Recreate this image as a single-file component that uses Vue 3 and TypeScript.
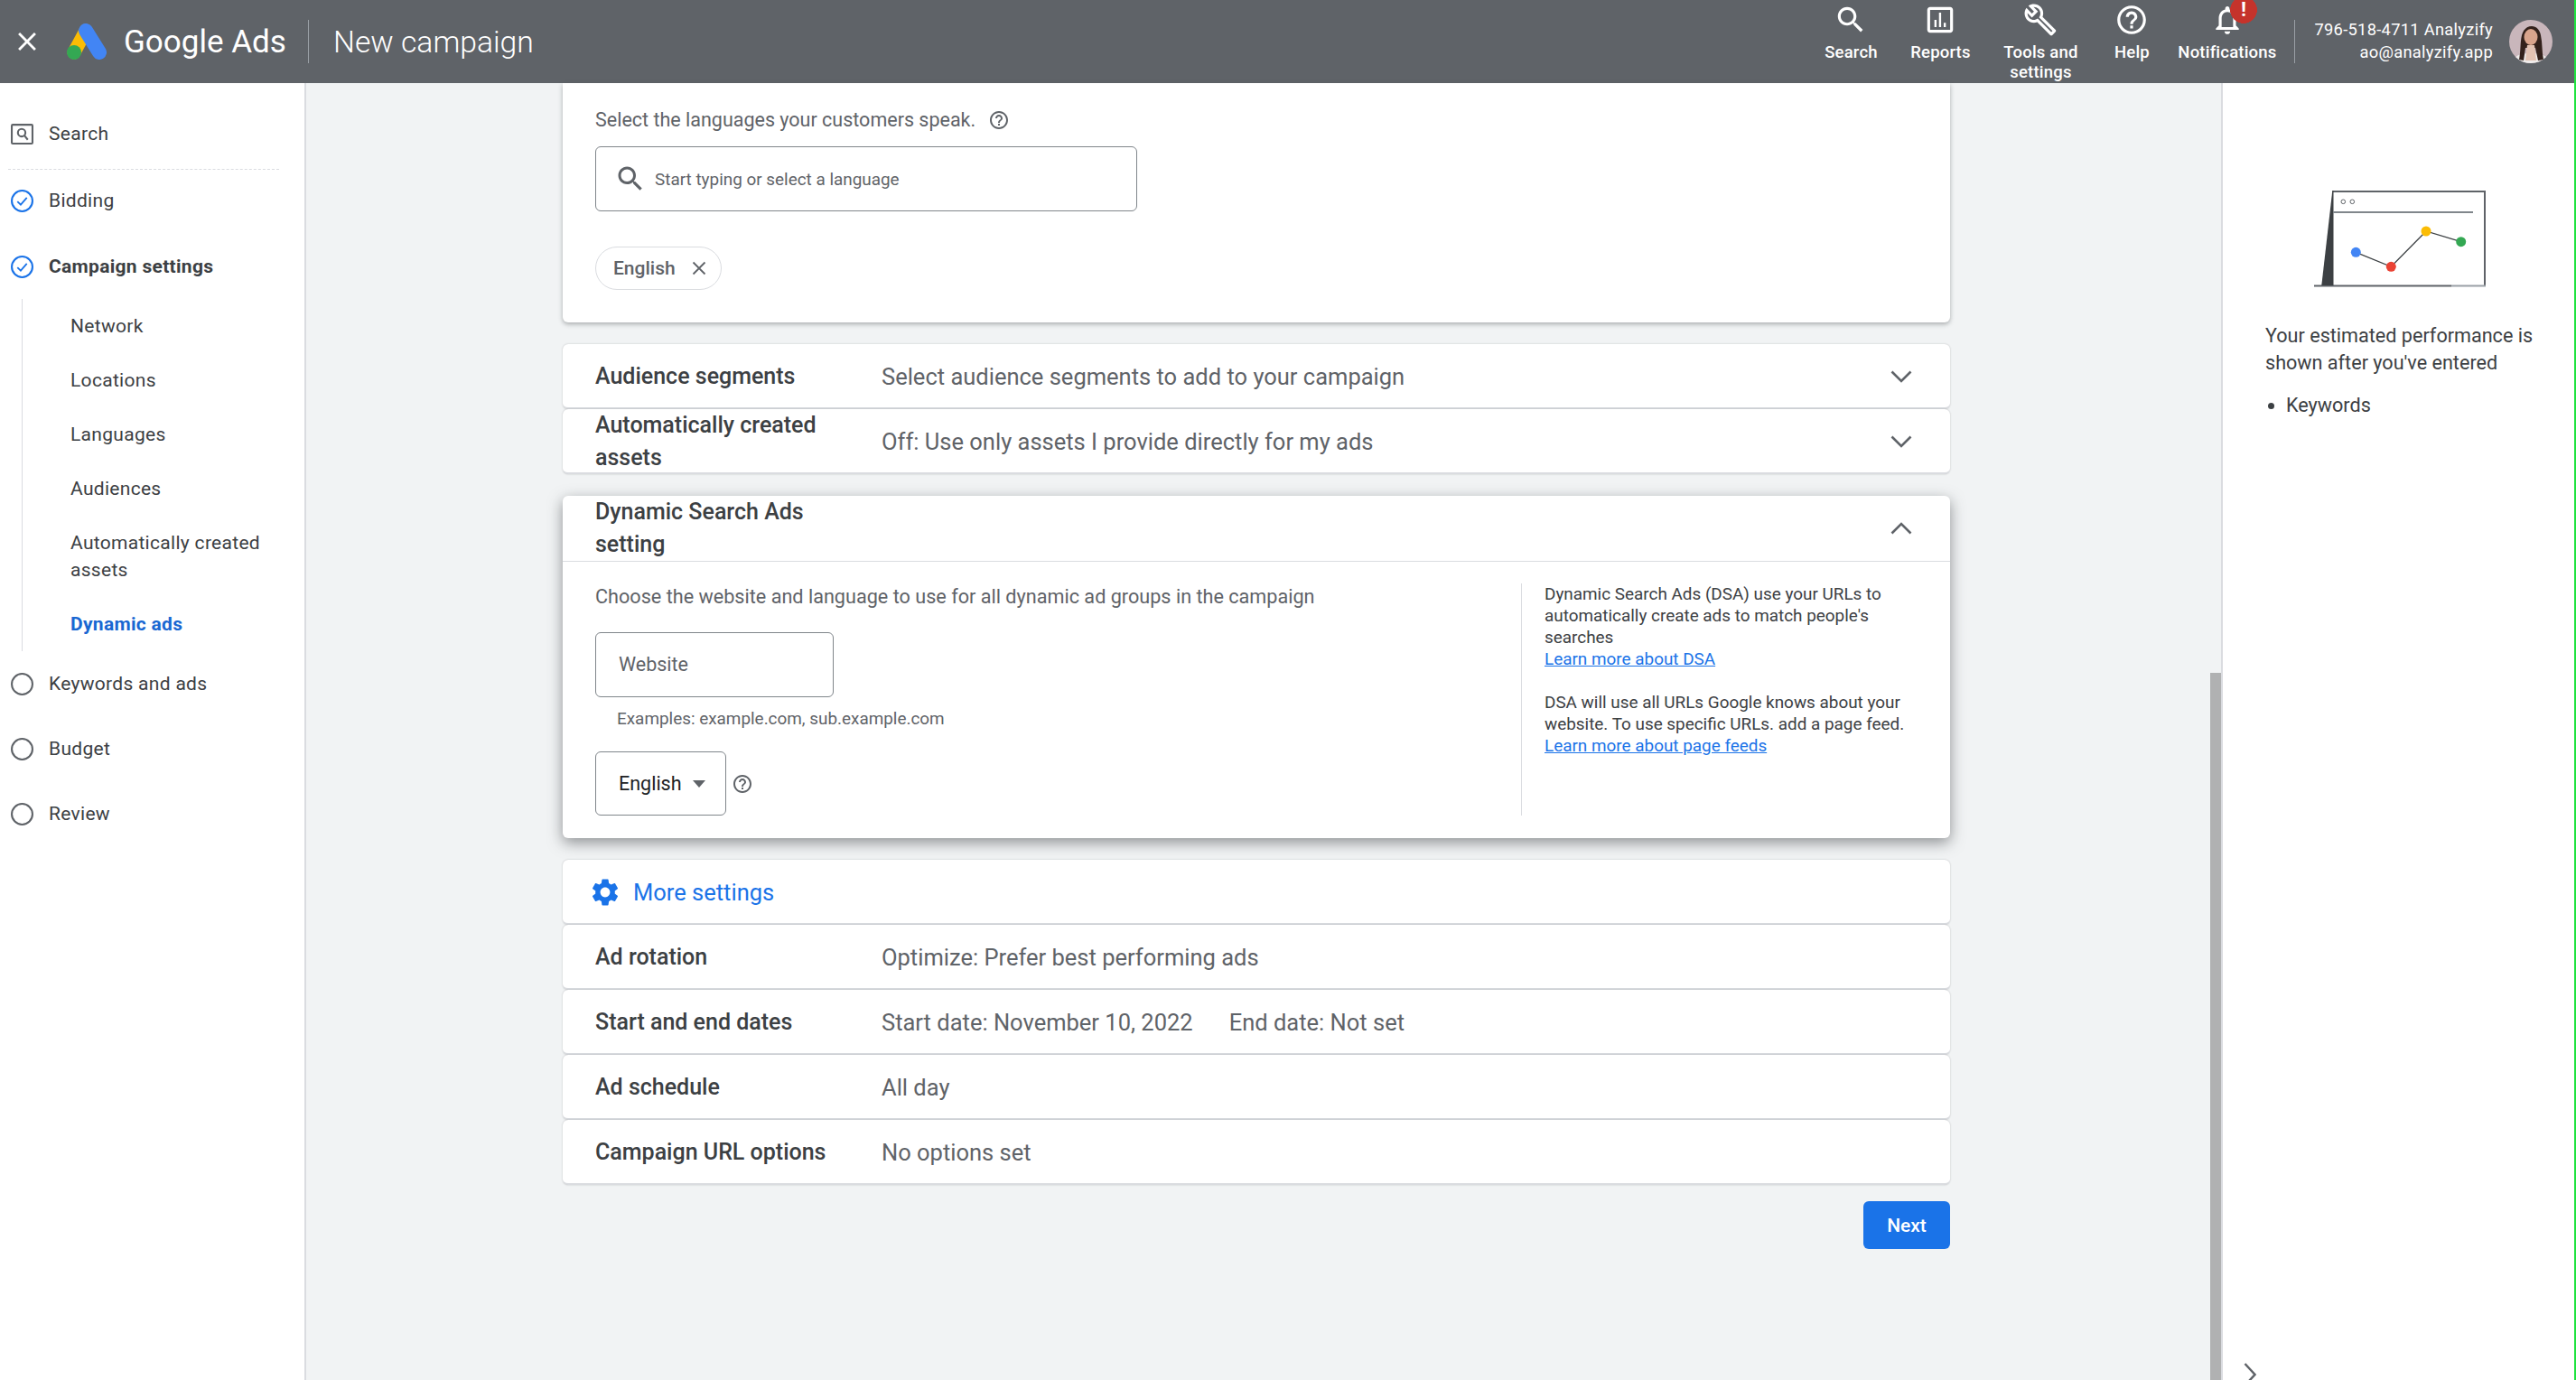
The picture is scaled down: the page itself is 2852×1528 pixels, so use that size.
<script setup lang="ts">
const ICONS: Record<string, string> = {
  search: 'M15.5 14h-.79l-.28-.27C15.41 12.59 16 11.11 16 9.5 16 5.91 13.09 3 9.5 3S3 5.91 3 9.5 5.91 16 9.5 16c1.61 0 3.09-.59 4.23-1.57l.27.28v.79l5 4.99L20.49 19l-4.99-5zm-6 0C7.01 14 5 11.99 5 9.5S7.01 5 9.5 5 14 7.01 14 9.5 11.99 14 9.5 14z',
  reports: 'M19 3H5c-1.1 0-2 .9-2 2v14c0 1.1.9 2 2 2h14c1.1 0 2-.9 2-2V5c0-1.1-.9-2-2-2zm0 16H5V5h14v14zM8 12h1.5v5H8zm3.2-5h1.5v10h-1.500zm3.300 7h1.500v3h-1.500z',
  tools: 'M22.61 18.99l-9.08-9.08c.93-2.34.45-5.1-1.44-7C9.79.61 6.21.4 3.66 2.26L7.5 6.11 6.08 7.52 2.25 3.69C.39 6.23.6 9.82 2.9 12.11c1.86 1.86 4.57 2.35 6.89 1.48l9.11 9.11c.39.39 1.02.39 1.41 0l2.3-2.3c.4-.38.4-1.01 0-1.41zm-3 1.6l-9.46-9.46c-.61.45-1.29.72-2 .82-1.36.2-2.79-.21-3.83-1.25C3.37 9.76 2.93 8.5 3 7.26l3.09 3.09 4.24-4.24-3.09-3.09c1.24-.07 2.49.37 3.44 1.31 1.08 1.08 1.49 2.57 1.24 3.96-.12.71-.42 1.37-.88 1.96l9.45 9.45-.88.89z',
  help: 'M11 18h2v-2h-2v2zm1-16C6.48 2 2 6.48 2 12s4.48 10 10 10 10-4.48 10-10S17.52 2 12 2zm0 18c-4.41 0-8-3.59-8-8s3.59-8 8-8 8 3.59 8 8-3.59 8-8 8zm0-14c-2.21 0-4 1.79-4 4h2c0-1.1.9-2 2-2s2 .9 2 2c0 2-3 1.75-3 5h2c0-2.25 3-2.5 3-5 0-2.21-1.79-4-4-4z',
  bell: 'M12 22c1.1 0 2-.9 2-2h-4c0 1.1.9 2 2 2zm6-6v-5c0-3.07-1.63-5.64-4.5-6.32V4c0-.83-.67-1.5-1.5-1.5s-1.5.67-1.5 1.5v.68C7.64 5.36 6 7.92 6 11v5l-2 2v1h16v-1l-2-2zm-2 1H8v-6c0-2.48 1.51-4.500 4-4.500s4 2.020 4 4.500v6z',
  close: 'M19 6.410L17.590 5 12 10.590 6.410 5 5 6.410 10.590 12 5 17.590 6.410 19 12 13.410 17.590 19 19 17.590 13.410 12z',
  gear: 'M19.140 12.940c.04-.3.06-.61.06-.94 0-.32-.02-.64-.07-.94l2.030-1.580c.18-.14.23-.41.12-.61l-1.920-3.320c-.12-.22-.37-.29-.59-.22l-2.390.96c-.5-.38-1.030-.7-1.620-.94l-.36-2.540c-.04-.24-.24-.41-.48-.41h-3.840c-.24 0-.43.17-.47.41l-.36 2.540c-.59.24-1.130.57-1.620.94l-2.390-.96c-.22-.08-.47 0-.59.22L2.740 8.870c-.12.21-.08.47.12.61l2.030 1.580c-.05.3-.09.63-.09.94s.02.64.07.94l-2.030 1.580c-.18.14-.23.41-.12.61l1.920 3.320c.12.22.37.29.59.22l2.390-.96c.5.38 1.030.7 1.620.94l.36 2.540c.05.24.24.41.48.41h3.840c.24 0 .44-.17.47-.41l.36-2.540c.59-.24 1.130-.56 1.620-.94l2.390.96c.22.08.47 0 .59-.22l1.920-3.320c.12-.22.07-.47-.12-.61l-2.010-1.580zM12 15.600c-1.980 0-3.600-1.620-3.600-3.600s1.620-3.600 3.600-3.600 3.600 1.620 3.600 3.600-1.620 3.600-3.600 3.600z'
}

const topNav = [
  { label: 'Search', icon: 'search', width: 90 },
  { label: 'Reports', icon: 'reports', width: 108 },
  { label: 'Tools and settings', icon: 'tools', width: 114 },
  { label: 'Help', icon: 'help', width: 88 },
  { label: 'Notifications', icon: 'bell', width: 123, badge: true }
]

const subSteps = ['Network', 'Locations', 'Languages', 'Audiences', 'Automatically created assets']
const laterSteps = ['Keywords and ads', 'Budget', 'Review']

const lowerRows = [
  { label: 'Ad rotation', values: ['Optimize: Prefer best performing ads'] },
  { label: 'Start and end dates', values: ['Start date: November 10, 2022', 'End date: Not set'] },
  { label: 'Ad schedule', values: ['All day'] },
  { label: 'Campaign URL options', values: ['No options set'] }
]
</script>

<template>
  <div class="page">
    <header class="topbar">
      <svg class="close-icon" viewBox="0 0 24 24"><path :d="ICONS.close" /></svg>
      <svg class="logo" viewBox="0 0 44 40">
        <line x1="21" y1="8" x2="8" y2="32" stroke="#fbbc04" stroke-width="15" stroke-linecap="round" />
        <circle cx="8" cy="32" r="8" fill="#34a853" />
        <line x1="21" y1="8" x2="36" y2="32" stroke="#4285f4" stroke-width="16" stroke-linecap="round" />
      </svg>
      <span class="brand">Google Ads</span>
      <span class="bar-divider first"></span>
      <span class="title">New campaign</span>

      <nav class="top-nav">
        <div v-for="item in topNav" :key="item.label" class="top-item" :style="{ width: item.width + 'px' }">
          <svg class="top-icon" viewBox="0 0 24 24"><path :d="ICONS[item.icon]" /></svg>
          <span v-if="item.badge" class="badge">!</span>
          <span class="top-label">{{ item.label }}</span>
        </div>
      </nav>
      <span class="bar-divider"></span>
      <div class="account">
        <div>796-518-4711 Analyzify</div>
        <div>ao@analyzify.app</div>
      </div>
      <svg class="avatar" viewBox="0 0 48 48">
        <defs><clipPath id="av"><circle cx="24" cy="24" r="24" /></clipPath></defs>
        <g clip-path="url(#av)">
          <rect width="48" height="48" fill="#c9b6bb" />
          <path d="M4 48c1-8 7-11 20-11s19 3 20 11z" fill="#efeceb" />
          <path d="M11 44c2-10 1-18 3-27 2-7 6-10 11-10s9 4 10 10c2 9 1 18 3 27l-6 1-3-14H18l-2 14z" fill="#33211b" />
          <ellipse cx="24" cy="19" rx="7.500" ry="9" fill="#d9a48c" />
          <path d="M20 28h8l2 17H18z" fill="#e3c3b3" />
        </g>
      </svg>
    </header>

    <div class="body">
      <aside class="sidebar">
        <div class="step">
          <svg class="step-icon" viewBox="0 0 24 24" fill="none" stroke="#5f6368" stroke-width="2">
            <rect x="1" y="2" width="22" height="20" rx="1" />
            <circle cx="11.500" cy="10.500" r="4" />
            <line x1="14.500" y1="13.500" x2="18" y2="18" />
          </svg>
          <span>Search</span>
        </div>
        <div class="dashed"></div>
        <div class="step bidding">
          <svg class="step-icon" viewBox="0 0 24 24" fill="none" stroke="#1a73e8" stroke-width="2">
            <circle cx="12" cy="12" r="11" />
            <path d="M7 12.500l3.500 3.500 6.500-7.500" stroke-width="1.700" />
          </svg>
          <span>Bidding</span>
        </div>
        <div class="step current">
          <svg class="step-icon" viewBox="0 0 24 24" fill="none" stroke="#1a73e8" stroke-width="2">
            <circle cx="12" cy="12" r="11" />
            <path d="M7 12.500l3.500 3.500 6.500-7.500" stroke-width="1.700" />
          </svg>
          <span>Campaign settings</span>
        </div>
        <div class="sub-list">
          <div v-for="sub in subSteps" :key="sub" class="sub-step">{{ sub }}</div>
          <div class="sub-step active">Dynamic ads</div>
        </div>
        <div v-for="step in laterSteps" :key="step" class="step">
          <svg class="step-icon" viewBox="0 0 24 24" fill="none" stroke="#5f6368" stroke-width="2">
            <circle cx="12" cy="12" r="11" />
          </svg>
          <span>{{ step }}</span>
        </div>
      </aside>

      <main class="main">
        <section class="card lang-card">
          <div class="lang-label">
            <span>Select the languages your customers speak.</span>
            <svg class="help-small" viewBox="0 0 24 24"><path :d="ICONS.help" /></svg>
          </div>
          <div class="lang-input">
            <svg class="lang-search" viewBox="0 0 24 24"><path :d="ICONS.search" /></svg>
            <span>Start typing or select a language</span>
          </div>
          <div class="chip">
            <span>English</span>
            <svg class="chip-x" viewBox="0 0 16 16"><path d="M1.500 1.500l13 13M14.500 1.500l-13 13" /></svg>
          </div>
        </section>

        <div class="panel-row">
          <span class="row-label">Audience segments</span>
          <span class="row-value">Select audience segments to add to your campaign</span>
          <svg class="chev" viewBox="0 0 24 14"><path d="M1.500 1.500L12 12 22.500 1.500" /></svg>
        </div>
        <div class="panel-row">
          <span class="row-label">Automatically created assets</span>
          <span class="row-value">Off: Use only assets I provide directly for my ads</span>
          <svg class="chev" viewBox="0 0 24 14"><path d="M1.500 1.500L12 12 22.500 1.500" /></svg>
        </div>

        <section class="card dsa-card">
          <div class="dsa-head">
            <span class="row-label">Dynamic Search Ads setting</span>
            <svg class="chev" viewBox="0 0 24 14"><path d="M1.500 12.500L12 2 22.500 12.500" /></svg>
          </div>
          <div class="dsa-body">
            <div class="dsa-form">
              <div class="dsa-intro">Choose the website and language to use for all dynamic ad groups in the campaign</div>
              <div class="website-box">Website</div>
              <div class="hint">Examples: example.com, sub.example.com</div>
              <div class="lang-select-row">
                <div class="lang-select">
                  <span>English</span>
                  <span class="caret"></span>
                </div>
                <svg class="help-small" viewBox="0 0 24 24"><path :d="ICONS.help" /></svg>
              </div>
            </div>
            <div class="dsa-aside">
              <p>
                Dynamic Search Ads (DSA) use your URLs to automatically create ads to match people's searches<br />
                <a>Learn more about DSA</a>
              </p>
              <p>
                DSA will use all URLs Google knows about your website. To use specific URLs. add a page feed.<br />
                <a>Learn more about page feeds</a>
              </p>
            </div>
          </div>
        </section>

        <div class="panel-row more-row">
          <svg class="gear" viewBox="0 0 24 24"><path :d="ICONS.gear" /></svg>
          <span>More settings</span>
        </div>
        <div v-for="row in lowerRows" :key="row.label" class="panel-row">
          <span class="row-label">{{ row.label }}</span>
          <span v-for="value in row.values" :key="value" class="row-value spaced">{{ value }}</span>
        </div>

        <div class="actions">
          <button class="next-btn">Next</button>
        </div>
      </main>

      <div class="scroll-track"><div class="scroll-thumb"></div></div>

      <aside class="estimate">
        <svg class="illustration" viewBox="0 0 190 107">
          <path d="M20.300 1H189V105" fill="none" stroke="#5f6368" stroke-width="2" />
          <line x1="0" y1="105.500" x2="152" y2="105.500" stroke="#5f6368" stroke-width="2" />
          <line x1="152" y1="105.500" x2="190" y2="105.500" stroke="#9aa0a6" stroke-width="2" />
          <polygon points="20.300,0 21.500,0 21.500,105 8.300,105" fill="#3c4043" />
          <line x1="21" y1="24" x2="176" y2="24" stroke="#80868b" stroke-width="2" />
          <circle cx="32.300" cy="12.300" r="2.300" fill="none" stroke="#5f6368" />
          <circle cx="42.300" cy="12.300" r="2.300" fill="none" stroke="#5f6368" />
          <polyline points="46.300,68.300 85.300,84.300 124,45 162.700,56.700" fill="none" stroke="#3c4043" stroke-width="1.300" />
          <circle cx="46.300" cy="68.300" r="5.500" fill="#4285f4" />
          <circle cx="85.300" cy="84.300" r="5.500" fill="#ea4335" />
          <circle cx="124" cy="45" r="5.500" fill="#fbbc04" />
          <circle cx="162.700" cy="56.700" r="5.500" fill="#34a853" />
        </svg>
        <p class="estimate-text">Your estimated performance is shown after you've entered</p>
        <ul class="estimate-list"><li>Keywords</li></ul>
        <svg class="expand" viewBox="0 0 14 26"><path d="M1.500 1l11 12-11 12" /></svg>
      </aside>
    </div>
  </div>
</template>

<style>
html, body {
  margin: 0;
  background: #fff;
}
</style>

<style scoped>
.page {
  width: 2850px;
  height: 1528px;
  border-right: 2px solid #1fe33f;
  display: flex;
  flex-direction: column;
  overflow: hidden;
  font-family: Roboto, "Liberation Sans", sans-serif;
  color: #3c4043;
}

.topbar {
  height: 92px;
  flex: none;
  display: flex;
  align-items: center;
  background: #5f6368;
  color: #fff;
  padding-right: 24px;
}
.close-icon {
  width: 34px;
  height: 34px;
  margin-left: 13px;
  fill: #fff;
}
.logo {
  width: 44px;
  height: 40px;
  margin-left: 27px;
  flex: none;
}
.brand {
  font-size: 35px;
  margin-left: 19px;
  width: 204px;
  flex: none;
}
.bar-divider {
  width: 1px;
  height: 48px;
  background: #9aa0a6;
  flex: none;
  margin-left: 13px;
}
.bar-divider.first {
  margin-left: 0;
}
.title {
  font-size: 33.700px;
  font-weight: 300;
  margin-left: 27px;
}
.top-nav {
  display: flex;
  margin-left: auto;
  height: 92px;
}
.top-item {
  position: relative;
  display: flex;
  flex-direction: column;
  align-items: center;
  padding-top: 3px;
  box-sizing: border-box;
}
.top-icon {
  width: 38px;
  height: 38px;
  fill: #fff;
  flex: none;
}
.top-label {
  margin-top: 6px;
  font-size: 18.500px;
  font-weight: 500;
  line-height: 22px;
  text-align: center;
  letter-spacing: 0.2px;
}
.badge {
  position: absolute;
  top: 0;
  left: calc(50% + 3px);
  width: 30px;
  height: 26px;
  background: radial-gradient(circle 15px at 15px 11px, #c5332b 98%, transparent 100%);
  color: #fff;
  font-size: 22px;
  font-weight: 700;
  line-height: 22px;
  text-align: center;
}
.account {
  margin: -2px 0 0 21px;
  font-size: 18.300px;
  line-height: 25px;
  text-align: right;
  letter-spacing: 0.3px;
}
.avatar {
  width: 48px;
  height: 48px;
  margin-left: 18px;
  flex: none;
}

.body {
  flex: 1;
  min-height: 0;
  display: flex;
}

.sidebar {
  width: 339px;
  flex: none;
  box-sizing: border-box;
  border-right: 2px solid #dadce0;
  padding-top: 20px;
  background: #fff;
  font-size: 21px;
  letter-spacing: 0.3px;
}
.step {
  height: 72px;
  display: flex;
  align-items: center;
  padding-left: 12px;
}
.step-icon {
  width: 25px;
  height: 25px;
  margin-right: 17px;
  flex: none;
}
.dashed {
  margin: 3px 28px 0 9px;
  border-top: 1px dashed #dadce0;
}
.step.bidding {
  height: 68px;
}
.step.current {
  margin-top: 3px;
  font-weight: 700;
}
.sub-list {
  margin-left: 24px;
  padding-left: 53px;
  border-left: 1px solid #dadce0;
}
.sub-step {
  padding: 15px 30px 15px 0;
  line-height: 30px;
}
.sub-step.active {
  color: #1967d2;
  font-weight: 700;
}

.main {
  width: 2108px;
  flex: none;
  background: #f1f3f4;
  padding-left: 284px;
  box-sizing: border-box;
}
.card {
  width: 1536px;
  box-sizing: border-box;
  background: #fff;
}
.lang-card {
  height: 265px;
  padding: 26px 36px 0;
  border-radius: 0 0 6px 6px;
  box-shadow: 0 2px 5px rgba(60, 64, 67, 0.4);
  margin-bottom: 24px;
}
.lang-label {
  display: flex;
  align-items: center;
  font-size: 21.500px;
  line-height: 30px;
  color: #5f6368;
}
.help-small {
  width: 24px;
  height: 24px;
  margin-left: 14px;
  fill: #5f6368;
  flex: none;
}
.lang-input {
  margin-top: 14px;
  width: 600px;
  height: 72px;
  box-sizing: border-box;
  border: 1.5px solid #80868b;
  border-radius: 6px;
  display: flex;
  align-items: center;
  padding-left: 20px;
  font-size: 18.900px;
  color: #5f6368;
}
.lang-search {
  width: 36px;
  height: 36px;
  fill: #5f6368;
  margin-right: 9px;
  flex: none;
}
.chip {
  margin-top: 39px;
  width: 140px;
  height: 48px;
  box-sizing: border-box;
  border: 1px solid #dadce0;
  border-radius: 24px;
  display: flex;
  align-items: center;
  padding-left: 19px;
  font-size: 21px;
  font-weight: 500;
  color: #5f6368;
}
.chip-x {
  width: 16px;
  height: 16px;
  margin-left: 18px;
  fill: none;
  stroke: #5f6368;
  stroke-width: 1.800;
}

.panel-row {
  width: 1536px;
  height: 72px;
  box-sizing: border-box;
  background: #fff;
  border-bottom: 2px solid #dadce0;
  border-radius: 6px;
  box-shadow: 0 0 2px rgba(60, 64, 67, 0.3);
  display: flex;
  align-items: center;
  padding: 2px 0 0 36px;
  position: relative;
}
.row-label {
  width: 317px;
  flex: none;
  box-sizing: border-box;
  padding-right: 60px;
  font-size: 25px;
  font-weight: 500;
  line-height: 36px;
  color: #3c4043;
}
.row-value {
  font-size: 25.500px;
  color: #5f6368;
}
.row-value.spaced + .row-value.spaced {
  margin-left: 40px;
}
.chev {
  width: 24px;
  height: 14px;
  margin-left: auto;
  margin-right: 42px;
  fill: none;
  stroke: #5f6368;
  stroke-width: 2.600;
  flex: none;
}

.dsa-card {
  margin: 24px 0;
  height: 379px;
  border-radius: 6px;
  box-shadow: 0 5px 16px rgba(60, 64, 67, 0.55);
  display: flex;
  flex-direction: column;
  position: relative;
}
.dsa-head {
  height: 73px;
  flex: none;
  box-sizing: border-box;
  border-bottom: 1px solid #dadce0;
  display: flex;
  align-items: center;
  padding-left: 36px;
}
.dsa-body {
  flex: 1;
  display: flex;
}
.dsa-form {
  width: 1061px;
  flex: none;
  box-sizing: border-box;
  padding: 24px 0 0 36px;
}
.dsa-intro {
  font-size: 21.640px;
  line-height: 30px;
  color: #5f6368;
}
.website-box {
  margin-top: 24px;
  width: 264px;
  height: 72px;
  box-sizing: border-box;
  border: 1.500px solid #80868b;
  border-radius: 6px;
  padding-left: 25px;
  line-height: 70px;
  font-size: 21.500px;
  color: #5f6368;
}
.hint {
  margin: 12px 0 0 24px;
  line-height: 24px;
  font-size: 18.900px;
  color: #5f6368;
}
.lang-select-row {
  margin-top: 24px;
  display: flex;
  align-items: center;
}
.lang-select {
  width: 145px;
  height: 71px;
  box-sizing: border-box;
  border: 1.500px solid #80868b;
  border-radius: 6px;
  display: flex;
  align-items: center;
  padding-left: 25px;
  font-size: 21.500px;
  color: #202124;
}
.caret {
  margin-left: 12px;
  width: 0;
  height: 0;
  border-left: 7px solid transparent;
  border-right: 7px solid transparent;
  border-top: 8px solid #5f6368;
}
.lang-select-row .help-small {
  margin-left: 6px;
}
.dsa-aside {
  margin: 24px 0 25px;
  padding: 0 30px 0 25px;
  border-left: 1px solid #dadce0;
  font-size: 18.900px;
  line-height: 24px;
  color: #3c4043;
  flex: 1;
}
.dsa-aside p {
  margin: 0 0 24px;
}
.dsa-aside a {
  color: #1a73e8;
  text-decoration: underline;
}

.panel-row.more-row {
  color: #1a73e8;
  font-size: 25.500px;
  padding-left: 29px;
}
.gear {
  width: 36px;
  height: 36px;
  fill: #1a73e8;
  margin-right: 13px;
  flex: none;
}

.actions {
  width: 1536px;
  display: flex;
  justify-content: flex-end;
  margin-top: 18px;
}
.next-btn {
  width: 96px;
  height: 53px;
  border: none;
  border-radius: 6px;
  background: #1a73e8;
  color: #fff;
  font-family: inherit;
  font-size: 21px;
  font-weight: 500;
}

.scroll-track {
  width: 12px;
  flex: none;
  background: #f1f3f4;
  display: flex;
  flex-direction: column;
  justify-content: flex-end;
}
.scroll-thumb {
  height: 783px;
  background: #b0b1b2;
}

.estimate {
  width: 391px;
  flex: none;
  box-sizing: border-box;
  border-left: 2px solid #dadce0;
  background: #fff;
  position: relative;
  padding: 119px 0 0 47px;
}
.illustration {
  display: block;
  width: 190px;
  height: 107px;
  margin-left: 54px;
}
.estimate-text {
  margin: 39px 0 0;
  width: 320px;
  font-size: 21.600px;
  line-height: 30px;
  color: #3c4043;
}
.estimate-list {
  margin: 17px 0 0;
  padding-left: 23px;
  font-size: 21.600px;
  line-height: 30px;
}
.expand {
  position: absolute;
  left: 23px;
  top: 1417px;
  width: 14px;
  height: 26px;
  fill: none;
  stroke: #5f6368;
  stroke-width: 2.500;
}
</style>
